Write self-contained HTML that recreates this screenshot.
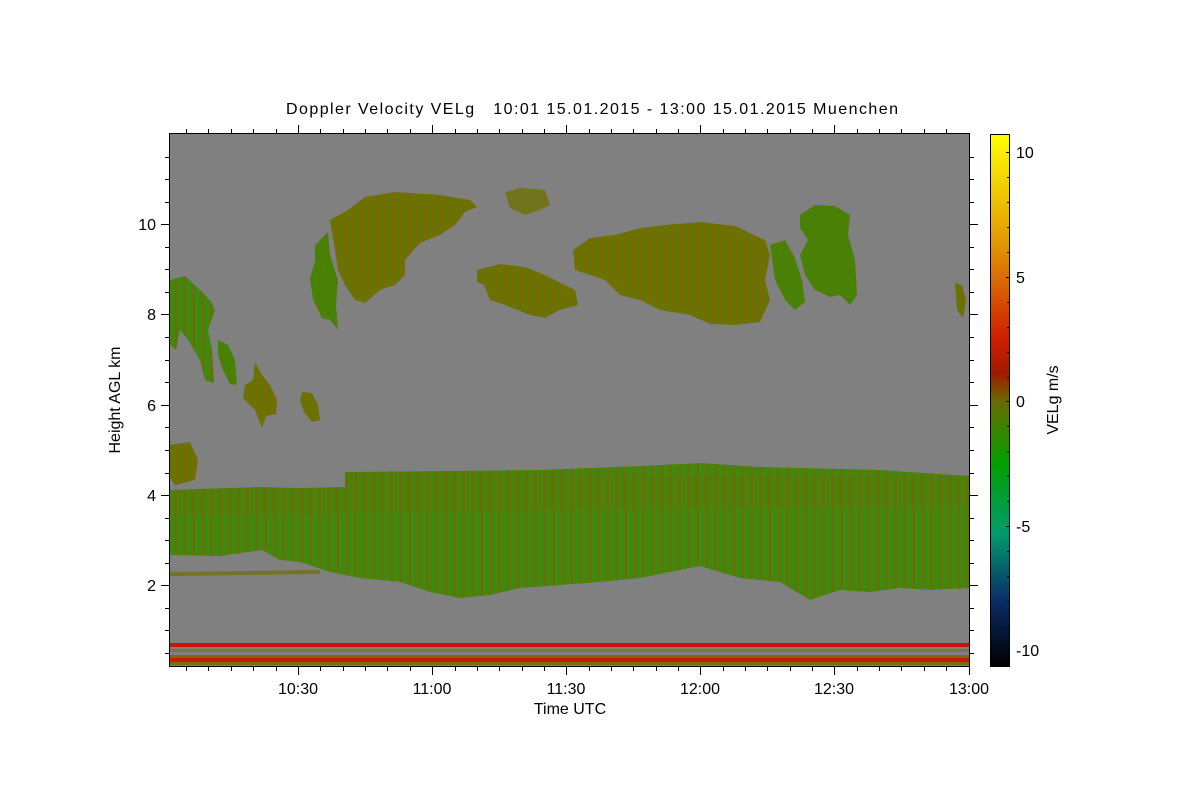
<!DOCTYPE html>
<html><head><meta charset="utf-8"><style>
html,body{margin:0;padding:0;background:#fff;width:1200px;height:800px;overflow:hidden}
svg{display:block}
text{font-family:"Liberation Sans",sans-serif;font-size:16px;fill:#000;white-space:pre}
</style></head><body>
<svg width="1200" height="800" viewBox="0 0 1200 800" xmlns="http://www.w3.org/2000/svg">
<defs>
<pattern id="st" width="9" height="10" patternUnits="userSpaceOnUse">
<rect width="9" height="10" fill="#4f800a"/>
<rect x="0" width="2" height="10" fill="#3a8c10"/>
<rect x="4" width="2" height="10" fill="#66700a"/>
<rect x="7" width="1" height="10" fill="#2f9416"/>
</pattern>
<pattern id="ol" width="8" height="10" patternUnits="userSpaceOnUse">
<rect width="8" height="10" fill="#6e7002"/>
<rect x="1" width="2" height="10" fill="#7a6a02"/>
<rect x="5" width="2" height="10" fill="#5e7806"/>
</pattern>
<pattern id="gr" width="8" height="10" patternUnits="userSpaceOnUse">
<rect width="8" height="10" fill="#4a8006"/>
<rect x="2" width="2" height="10" fill="#3a8a08"/>
<rect x="6" width="1" height="10" fill="#667204"/>
</pattern>
<linearGradient id="cb" x1="0" y1="0" x2="0" y2="1">
<stop offset="0" stop-color="#ffff00"/>
<stop offset="0.2" stop-color="#e39b00"/>
<stop offset="0.38" stop-color="#d02000"/>
<stop offset="0.45" stop-color="#a01a00"/>
<stop offset="0.5" stop-color="#6a6a00"/>
<stop offset="0.62" stop-color="#00a000"/>
<stop offset="0.75" stop-color="#009b6e"/>
<stop offset="0.88" stop-color="#0a2a66"/>
<stop offset="1" stop-color="#000000"/>
</linearGradient>
</defs>
<text x="286" y="114" textLength="612" lengthAdjust="spacing">Doppler Velocity VELg   10:01 15.01.2015 - 13:00 15.01.2015 Muenchen</text>
<rect x="170" y="134" width="800" height="533" fill="#808080"/>
<path d="M170,280 L185,276 L200,290 L210,300 L215,310 L208,330 L212,350 L214,383 L205,380 L200,360 L188,340 L180,330 L176,350 L170,345Z" fill="url(#st)"/>
<path d="M218,340 L228,345 L235,360 L237,385 L230,384 L222,368 L218,355Z" fill="url(#gr)"/>
<path d="M255,362 L262,375 L270,385 L277,400 L276,414 L266,416 L262,428 L255,410 L243,398 L245,385 L253,380Z" fill="url(#ol)"/>
<path d="M302,392 L312,393 L318,405 L320,420 L312,422 L304,412 L300,400Z" fill="url(#ol)"/>
<path d="M315,245 L328,232 L330,255 L338,280 L336,305 L338,330 L330,320 L322,318 L313,300 L310,278 L315,262Z" fill="url(#gr)"/>
<path d="M330,220 L348,210 L365,197 L395,192 L440,195 L470,200 L477,207 L465,212 L455,225 L440,235 L420,243 L405,260 L405,275 L395,285 L380,290 L365,303 L355,300 L345,285 L338,270 L335,250Z" fill="url(#ol)"/>
<path d="M477,270 L500,264 L525,267 L545,275 L575,290 L578,305 L560,310 L545,318 L530,315 L505,305 L490,300 L484,285 L477,282Z" fill="url(#ol)"/>
<path d="M573,250 L590,238 L615,235 L640,228 L665,225 L700,222 L735,226 L765,240 L770,255 L765,280 L770,300 L760,322 L735,325 L710,324 L690,315 L660,310 L640,300 L620,295 L605,280 L590,275 L575,270Z" fill="url(#ol)"/>
<path d="M770,245 L785,240 L795,258 L802,280 L805,302 L795,310 L785,300 L775,280Z" fill="url(#gr)"/>
<path d="M800,215 L815,205 L835,206 L850,215 L848,235 L855,260 L857,295 L850,305 L840,295 L830,297 L815,290 L805,275 L800,255 L808,240 L800,228Z" fill="url(#gr)"/>
<path d="M955,283 L962,285 L966,300 L963,318 L957,310Z" fill="url(#ol)"/>
<path d="M170,445 L190,442 L198,460 L195,480 L175,485 L170,478Z" fill="url(#ol)"/>
<path d="M505,192 L520,188 L545,190 L550,205 L540,210 L525,215 L510,208Z" fill="url(#ol)" opacity="0.8"/>
<path d="M170,490 L260,487 L300,488 L345,487 L345,472 L450,471 L540,470 L640,466 L700,463 L760,467 L880,470 L970,476 L970,588 L930,590 L900,588 L870,592 L840,590 L810,600 L780,582 L740,578 L700,566 L680,570 L640,578 L600,582 L560,585 L520,588 L490,595 L460,598 L430,592 L400,582 L360,578 L330,572 L300,562 L280,560 L262,550 L220,556 L170,555Z" fill="url(#st)"/>
<path d="M170,490 L345,487 L345,472 L970,476 L970,505 L170,515Z" fill="#6e6c04" opacity="0.25"/>
<path d="M170,572 L320,570 L320,574 L170,576Z" fill="#6e6c04" opacity="0.7"/>
<rect x="170" y="643" width="800" height="4" fill="#d01010"/>
<rect x="170" y="649" width="800" height="3" fill="#7a6a10" opacity="0.6"/>
<rect x="170" y="655" width="800" height="3" fill="#806a00"/>
<rect x="170" y="658" width="800" height="4" fill="#c81a10"/>
<rect x="170" y="662" width="800" height="3" fill="#7a6a10"/>
<rect x="169.5" y="133.5" width="800" height="533" fill="none" stroke="#000" stroke-width="1"/>
<g stroke="#000" stroke-width="1">
<path d="M298.5,667v8M432.5,667v8M566.5,667v8M700.5,667v8M834.5,667v8M969.5,667v8M298.5,133v-8M432.5,133v-8M566.5,133v-8M700.5,133v-8M834.5,133v-8"/>
<path d="M186.5,667v4M208.5,667v4M231.5,667v4M253.5,667v4M276.5,667v4M320.5,667v4M343.5,667v4M365.5,667v4M387.5,667v4M410.5,667v4M455.5,667v4M477.5,667v4M499.5,667v4M522.5,667v4M544.5,667v4M589.5,667v4M611.5,667v4M633.5,667v4M656.5,667v4M678.5,667v4M723.5,667v4M745.5,667v4M767.5,667v4M790.5,667v4M812.5,667v4M857.5,667v4M879.5,667v4M901.5,667v4M924.5,667v4M946.5,667v4"/>
<path d="M186.5,133v-4M208.5,133v-4M231.5,133v-4M253.5,133v-4M276.5,133v-4M320.5,133v-4M343.5,133v-4M365.5,133v-4M387.5,133v-4M410.5,133v-4M455.5,133v-4M477.5,133v-4M499.5,133v-4M522.5,133v-4M544.5,133v-4M589.5,133v-4M611.5,133v-4M633.5,133v-4M656.5,133v-4M678.5,133v-4M723.5,133v-4M745.5,133v-4M767.5,133v-4M790.5,133v-4M812.5,133v-4M857.5,133v-4M879.5,133v-4M901.5,133v-4M924.5,133v-4M946.5,133v-4"/>
<path d="M169,585.5h-8M169,495.5h-8M169,405.5h-8M169,314.5h-8M169,224.5h-8M970,585.5h8M970,495.5h8M970,405.5h8M970,314.5h8M970,224.5h8"/>
<path d="M169,653.5h-4M169,630.5h-4M169,608.5h-4M169,563.5h-4M169,540.5h-4M169,518.5h-4M169,473.5h-4M169,450.5h-4M169,427.5h-4M169,382.5h-4M169,360.5h-4M169,337.5h-4M169,292.5h-4M169,269.5h-4M169,247.5h-4M169,202.5h-4M169,179.5h-4M169,157.5h-4"/>
<path d="M970,653.5h4M970,630.5h4M970,608.5h4M970,563.5h4M970,540.5h4M970,518.5h4M970,473.5h4M970,450.5h4M970,427.5h4M970,382.5h4M970,360.5h4M970,337.5h4M970,292.5h4M970,269.5h4M970,247.5h4M970,202.5h4M970,179.5h4M970,157.5h4"/>
</g>
<g text-anchor="end">
<text x="156" y="591">2</text><text x="156" y="501">4</text><text x="156" y="411">6</text><text x="156" y="320">8</text><text x="156" y="230">10</text>
</g>
<g text-anchor="middle">
<text x="298" y="694">10:30</text><text x="432" y="694">11:00</text><text x="566" y="694">11:30</text><text x="700" y="694">12:00</text><text x="834" y="694">12:30</text><text x="969" y="694">13:00</text>
<text x="570" y="714">Time UTC</text>
</g>
<text transform="translate(120,400) rotate(-90)" text-anchor="middle">Height AGL km</text>
<rect x="990.5" y="134.5" width="19" height="532" fill="url(#cb)" stroke="#000" stroke-width="1"/>
<g stroke="#000"><path d="M1009,152.5h-3M1009,277.5h-3M1009,401.5h-3M1009,526.5h-3M1009,650.5h-3M1009,177.5h-2M1009,202.5h-2M1009,227.5h-2M1009,252.5h-2M1009,302.5h-2M1009,327.5h-2M1009,352.5h-2M1009,377.5h-2M1009,426.5h-2M1009,451.5h-2M1009,476.5h-2M1009,501.5h-2M1009,551.5h-2M1009,576.5h-2M1009,601.5h-2M1009,626.5h-2"/></g>
<text x="1016" y="158">10</text><text x="1016" y="283">5</text><text x="1016" y="407">0</text><text x="1016" y="532">-5</text><text x="1016" y="656">-10</text>
<text transform="translate(1058,400) rotate(-90)" text-anchor="middle">VELg m/s</text>
</svg>
</body></html>
